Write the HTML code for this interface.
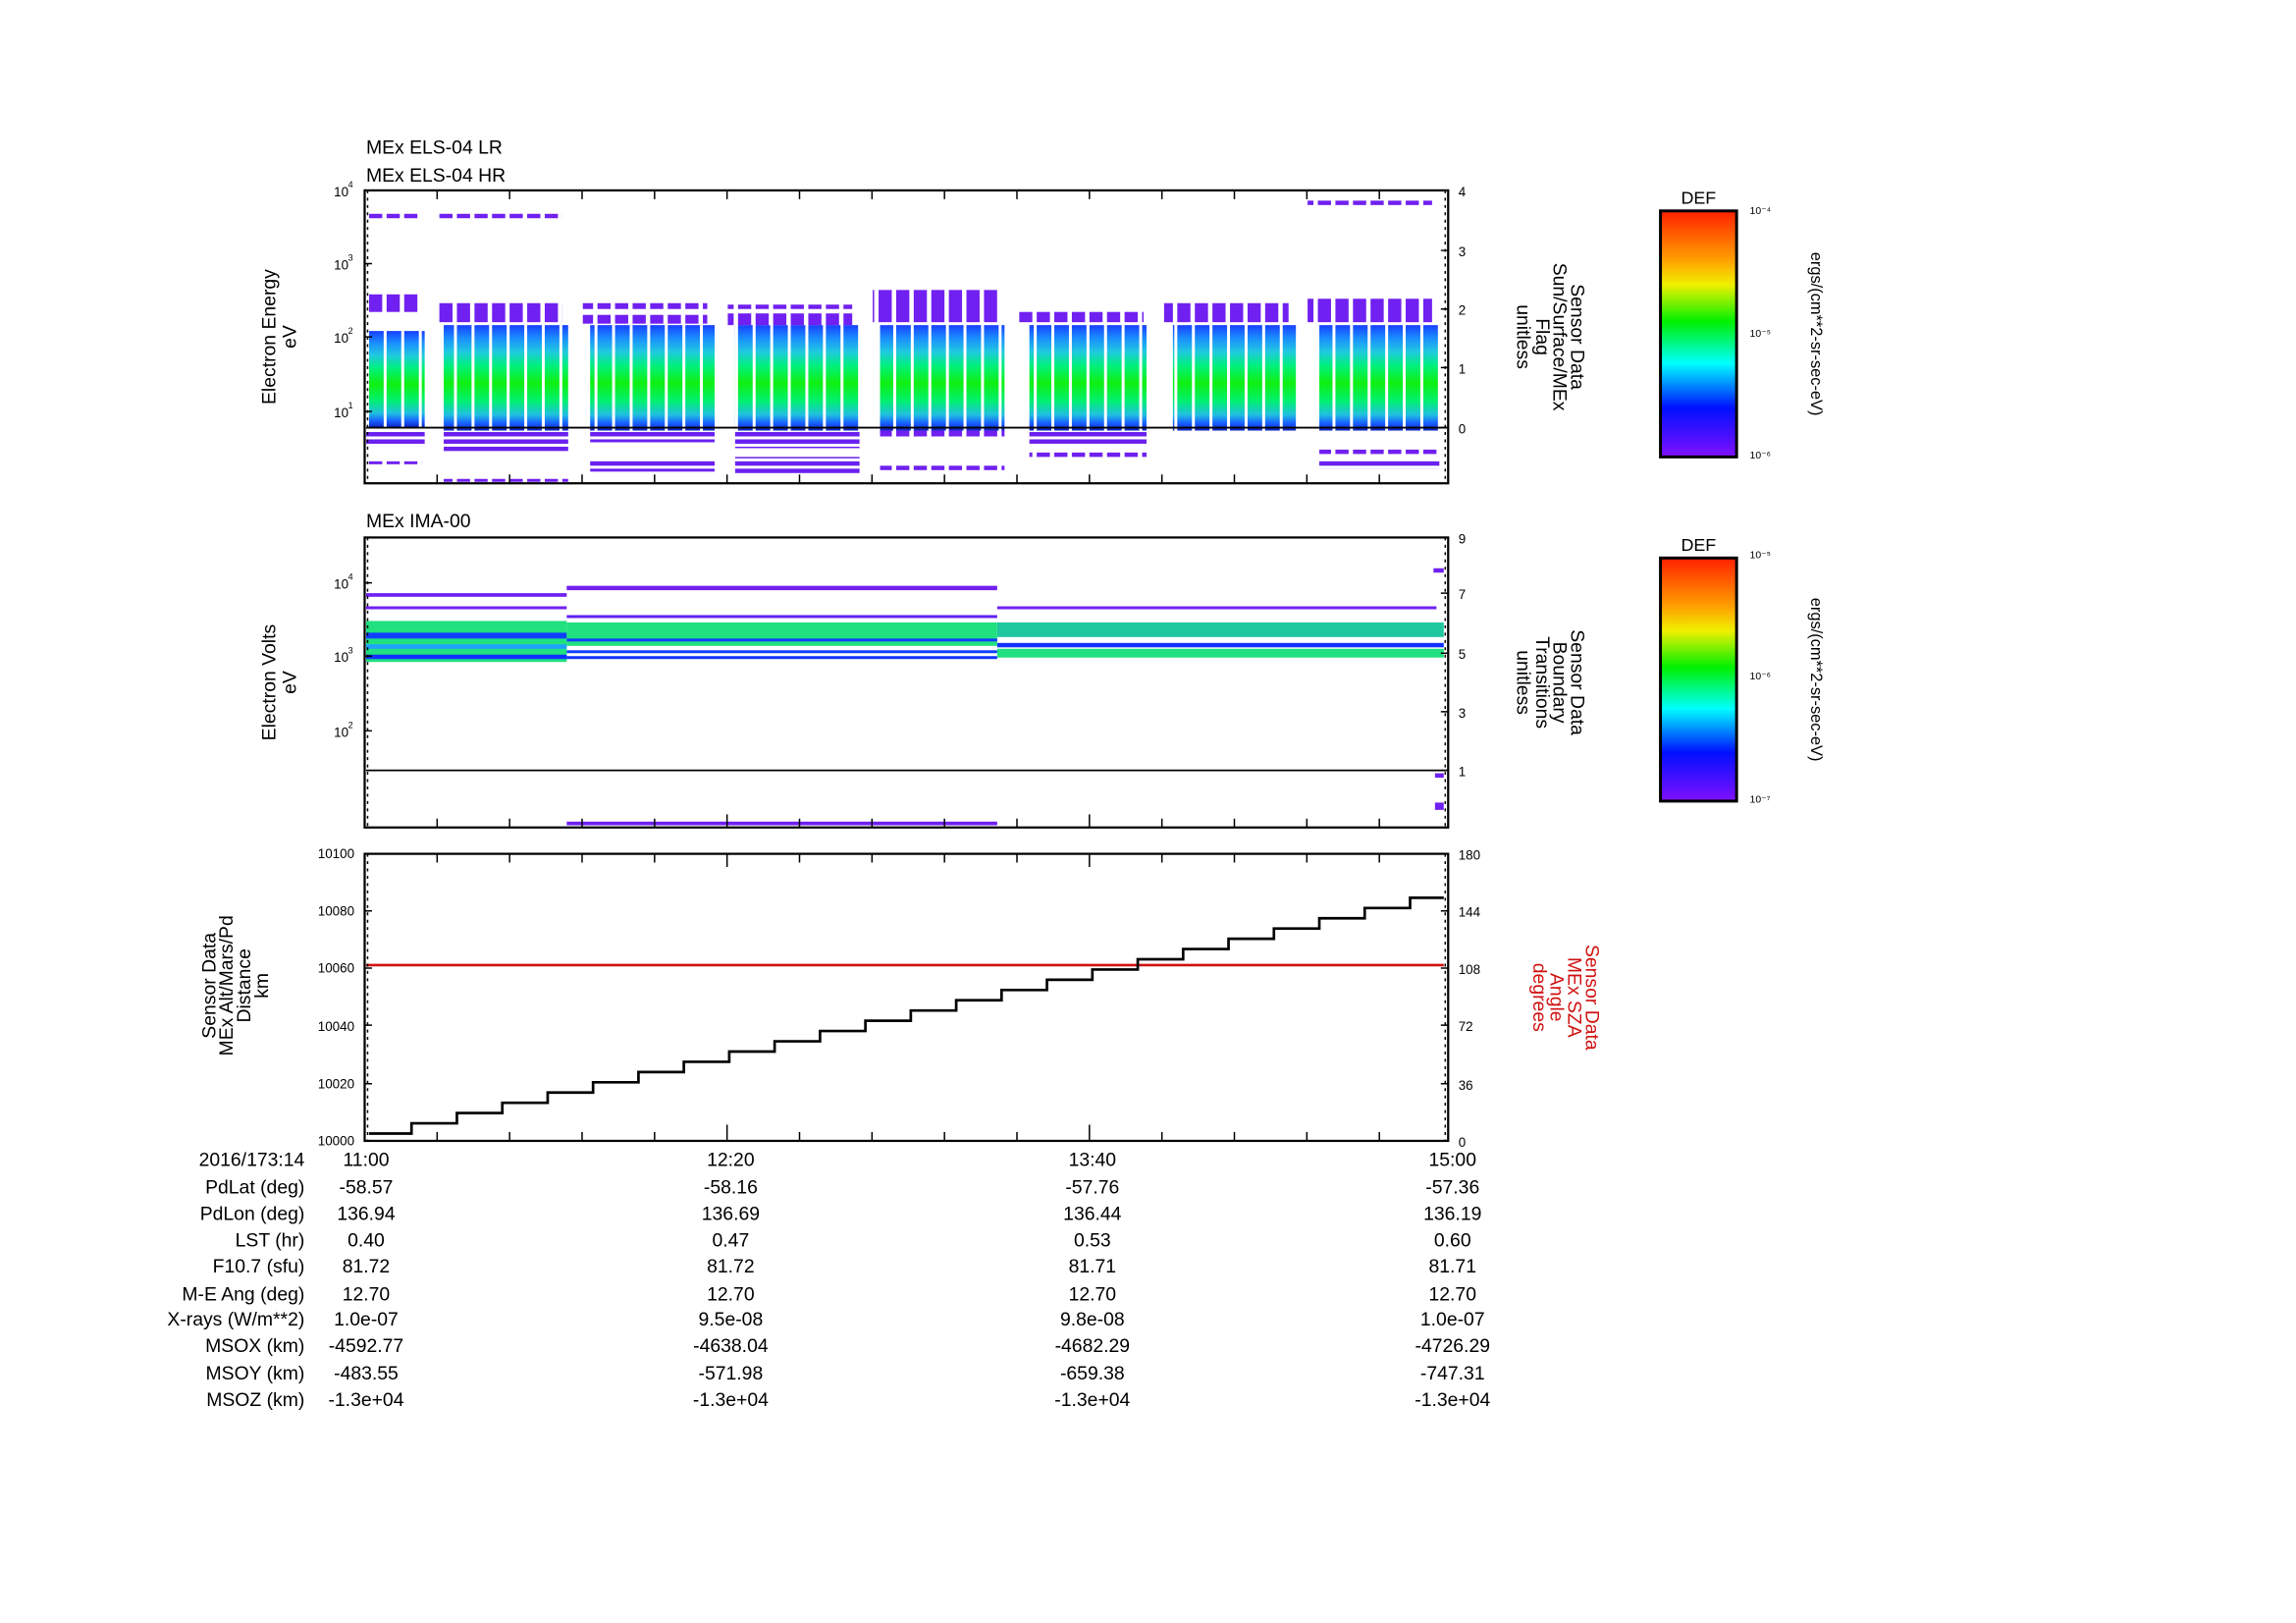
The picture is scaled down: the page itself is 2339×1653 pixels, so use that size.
<!DOCTYPE html>
<html><head><meta charset="utf-8"><style>
html,body{margin:0;padding:0;background:#fff;}
svg{display:block;font-family:"Liberation Sans",sans-serif;}
</style></head><body>
<svg width="2339" height="1653" viewBox="0 0 1568 1108.2" xmlns="http://www.w3.org/2000/svg">
<defs>
<linearGradient id="sp" x1="0" y1="0" x2="0" y2="1">
<stop offset="0" stop-color="#1840ff"/><stop offset="0.12" stop-color="#1a8cff"/>
<stop offset="0.25" stop-color="#20c8e0"/><stop offset="0.38" stop-color="#00f080"/>
<stop offset="0.55" stop-color="#10f010"/><stop offset="0.72" stop-color="#00f070"/>
<stop offset="0.85" stop-color="#20c0e0"/><stop offset="0.93" stop-color="#1860ff"/>
<stop offset="1" stop-color="#1020c0"/></linearGradient>
<linearGradient id="cb" x1="0" y1="0" x2="0" y2="1">
<stop offset="0" stop-color="#ff2000"/><stop offset="0.2" stop-color="#ffa000"/>
<stop offset="0.3" stop-color="#f0f000"/><stop offset="0.45" stop-color="#00f000"/>
<stop offset="0.62" stop-color="#00ffff"/><stop offset="0.8" stop-color="#0010ff"/>
<stop offset="1" stop-color="#8010ff"/></linearGradient>
<pattern id="gap" width="12" height="10" patternUnits="userSpaceOnUse"><rect x="10" y="0" width="2" height="10" fill="#fff"/></pattern>
<pattern id="dash" width="12" height="10" patternUnits="userSpaceOnUse"><rect x="0" y="0" width="9" height="10" fill="#7020f0"/></pattern>
<pattern id="hd" width="10" height="5" patternUnits="userSpaceOnUse"><rect x="0" y="0" width="10" height="3" fill="#6a20f0"/></pattern>
</defs>

<text x="250" y="105" font-size="13">MEx ELS-04 LR</text>
<text x="250" y="124" font-size="13">MEx ELS-04 HR</text>
<g>
<rect x="250" y="226" width="40" height="66" fill="url(#sp)"/>
<rect x="303" y="222" width="85" height="72" fill="url(#sp)"/>
<rect x="403" y="222" width="85" height="72" fill="url(#sp)"/>
<rect x="502" y="222" width="85" height="72" fill="url(#sp)"/>
<rect x="601" y="222" width="85" height="72" fill="url(#sp)"/>
<rect x="703" y="222" width="80" height="72" fill="url(#sp)"/>
<rect x="801" y="222" width="84" height="72" fill="url(#sp)"/>
<rect x="901" y="222" width="82" height="72" fill="url(#sp)"/>
<rect x="250" y="220" width="735" height="80" fill="url(#gap)"/>
<rect x="250" y="146" width="36" height="3" fill="url(#dash)"/>
<rect x="300" y="146" width="84" height="3" fill="url(#dash)"/>
<rect x="893" y="137" width="85" height="3" fill="url(#dash)"/>
<rect x="250" y="201" width="36" height="12" fill="url(#dash)"/>
<rect x="300" y="207" width="84" height="13" fill="url(#dash)"/>
<rect x="398" y="207" width="85" height="4" fill="url(#dash)"/>
<rect x="398" y="215" width="85" height="6" fill="url(#dash)"/>
<rect x="497" y="208" width="85" height="3" fill="url(#dash)"/>
<rect x="497" y="214" width="85" height="8" fill="url(#dash)"/>
<rect x="596" y="198" width="85" height="22" fill="url(#dash)"/>
<rect x="696" y="213" width="85" height="7" fill="url(#dash)"/>
<rect x="795" y="207" width="85" height="13" fill="url(#dash)"/>
<rect x="893" y="204" width="85" height="16" fill="url(#dash)"/>
<rect x="250" y="293" width="40" height="12" fill="url(#hd)"/>
<rect x="250" y="315" width="38" height="2" fill="url(#dash)"/>
<rect x="303" y="294" width="85" height="14" fill="url(#hd)"/>
<rect x="303" y="327" width="85" height="2" fill="url(#dash)"/>
<rect x="403" y="294" width="85" height="8" fill="url(#hd)"/>
<rect x="403" y="314" width="85" height="8" fill="url(#hd)"/>
<rect x="502" y="294" width="85" height="12" fill="url(#hd)"/>
<rect x="502" y="312" width="85" height="12" fill="url(#hd)"/>
<rect x="601" y="294" width="85" height="4" fill="url(#dash)"/>
<rect x="601" y="318" width="85" height="3" fill="url(#dash)"/>
<rect x="703" y="294" width="80" height="9" fill="url(#hd)"/>
<rect x="703" y="309" width="80" height="3" fill="url(#dash)"/>
<rect x="901" y="307" width="82" height="3" fill="url(#dash)"/>
<rect x="901" y="314" width="82" height="6" fill="url(#hd)"/>
</g>
<line x1="250" y1="292" x2="988" y2="292" stroke="#000" stroke-width="1.3"/>
<rect x="249" y="130" width="740" height="200" fill="none" stroke="#000" stroke-width="1.5"/>

<text x="250" y="360" font-size="13">MEx IMA-00</text>
<rect x="250" y="405" width="137" height="2.5" fill="#7020f0"/>
<rect x="250" y="414" width="137" height="2" fill="#7020f0"/>
<rect x="250" y="424" width="137" height="28" fill="#20e080"/>
<rect x="250" y="432" width="137" height="4" fill="#1040ff"/>
<rect x="250" y="440" width="137" height="3" fill="#20a0ff"/>
<rect x="250" y="447" width="137" height="3" fill="#1030ff"/>
<rect x="387" y="400" width="294" height="3" fill="#7020f0"/>
<rect x="387" y="420" width="294" height="2" fill="#6020f0"/>
<rect x="387" y="425" width="294" height="16" fill="#20e080"/>
<rect x="387" y="436" width="294" height="2" fill="#1040ff"/>
<rect x="387" y="444" width="294" height="2" fill="#1040ff"/>
<rect x="387" y="448" width="294" height="2" fill="#1030ff"/>
<rect x="681" y="414" width="300" height="2" fill="#7020f0"/>
<rect x="681" y="425" width="305" height="10" fill="#20c8a0"/>
<rect x="681" y="439" width="305" height="3" fill="#1030ff"/>
<rect x="681" y="443" width="305" height="6" fill="#20e080"/>
<rect x="979" y="388" width="7" height="3" fill="#7020f0"/>
<rect x="387" y="561" width="294" height="2.5" fill="#7020f0"/>
<rect x="980" y="528" width="6" height="3" fill="#7020f0"/>
<rect x="980" y="548" width="6" height="5" fill="#7020f0"/>
<line x1="250" y1="526" x2="988" y2="526" stroke="#000" stroke-width="1.2"/>
<rect x="249" y="367" width="740" height="198" fill="none" stroke="#000" stroke-width="1.5"/>

<line x1="250" y1="659" x2="986" y2="659" stroke="#d01010" stroke-width="1.8"/>
<path d="M252 774 h29 v-7 h31 v-7 h31 v-7 h31 v-7 h31 v-7 h31 v-7 h31 v-7 h31 v-7 h31 v-7 h31 v-7 h31 v-7 h31 v-7 h31 v-7 h31 v-7 h31 v-7 h31 v-7 h31 v-7 h31 v-7 h31 v-7 h31 v-7 h31 v-7 h31 v-7 h31 v-7 h23" fill="none" stroke="#000" stroke-width="1.8"/>
<rect x="249" y="583" width="740" height="196" fill="none" stroke="#000" stroke-width="1.5"/>

<g stroke="#000" stroke-width="1">
<path d="M298.5 130v6M348 130v6M397.5 130v6M447 130v6M496.5 130v6M546 130v6M595.5 130v6M645 130v6M694.5 130v6M744 130v6M793.5 130v6M843 130v6M892.5 130v6M942 130v6"/>
<path d="M298.5 330v-6M348 330v-6M397.5 330v-6M447 330v-6M496.5 330v-6M546 330v-6M595.5 330v-6M645 330v-6M694.5 330v-6M744 330v-6M793.5 330v-6M843 330v-6M892.5 330v-6M942 330v-6"/>
<path d="M298.5 565v-6M348 565v-6M397.5 565v-6M447 565v-6M496.5 565v-9M546 565v-6M595.5 565v-6M645 565v-6M694.5 565v-6M744 565v-9M793.5 565v-6M843 565v-6M892.5 565v-6M942 565v-6"/>
<path d="M298.5 583v6M348 583v6M397.5 583v6M447 583v6M496.5 583v9M546 583v6M595.5 583v6M645 583v6M694.5 583v6M744 583v9M793.5 583v6M843 583v6M892.5 583v6M942 583v6"/>
<path d="M298.5 779v-6M348 779v-6M397.5 779v-6M447 779v-6M496.5 779v-11M546 779v-6M595.5 779v-6M645 779v-6M694.5 779v-6M744 779v-11M793.5 779v-6M843 779v-6M892.5 779v-6M942 779v-6"/>
<path d="M249 180h5M249 230h5M249 281h5M249 398h5M249 448h5M249 499h5M249 622h5M249 661h5M249 700h5M249 740h5"/>
<path d="M989 171h-5M989 211h-5M989 251h-5M989 292h-5M989 405h-5M989 446h-5M989 486h-5M989 526h-5M989 622h-5M989 661h-5M989 700h-5M989 740h-5"/>
</g>
<g stroke="#000" stroke-width="1" stroke-dasharray="2 3">
<line x1="251" y1="130" x2="251" y2="330"/><line x1="987" y1="130" x2="987" y2="330"/>
<line x1="251" y1="367" x2="251" y2="565"/><line x1="987" y1="367" x2="987" y2="565"/>
<line x1="251" y1="583" x2="251" y2="779"/><line x1="987" y1="583" x2="987" y2="779"/>
</g>

<g font-size="9" text-anchor="end">
<text x="238" y="134">10</text><text x="241" y="128" font-size="6">4</text>
<text x="238" y="184">10</text><text x="241" y="178" font-size="6">3</text>
<text x="238" y="234">10</text><text x="241" y="228" font-size="6">2</text>
<text x="238" y="285">10</text><text x="241" y="279" font-size="6">1</text>
<text x="238" y="402">10</text><text x="241" y="396" font-size="6">4</text>
<text x="238" y="452">10</text><text x="241" y="446" font-size="6">3</text>
<text x="238" y="503">10</text><text x="241" y="497" font-size="6">2</text>
<text x="242" y="586">10100</text><text x="242" y="625">10080</text><text x="242" y="664">10060</text>
<text x="242" y="704">10040</text><text x="242" y="743">10020</text><text x="242" y="782">10000</text>
</g>
<g font-size="9">
<text x="996" y="134">4</text><text x="996" y="175">3</text><text x="996" y="215">2</text><text x="996" y="255">1</text><text x="996" y="296">0</text>
<text x="996" y="371">9</text><text x="996" y="409">7</text><text x="996" y="450">5</text><text x="996" y="490">3</text><text x="996" y="530">1</text>
<text x="996" y="587">180</text><text x="996" y="626">144</text><text x="996" y="665">108</text><text x="996" y="704">72</text><text x="996" y="744">36</text><text x="996" y="783">0</text>
</g>
<g font-size="13" text-anchor="middle">
<text transform="translate(188 230) rotate(-90)">Electron Energy</text>
<text transform="translate(202 230) rotate(-90)">eV</text>
<text transform="translate(188 466) rotate(-90)">Electron Volts</text>
<text transform="translate(202 466) rotate(-90)">eV</text>
<text transform="translate(147 673) rotate(-90)">Sensor Data</text>
<text transform="translate(159 673) rotate(-90)">MEx Alt/Mars/Pd</text>
<text transform="translate(171 673) rotate(-90)">Distance</text>
<text transform="translate(183 673) rotate(-90)">km</text>
<text transform="translate(1073 230) rotate(90)">Sensor Data</text>
<text transform="translate(1061 230) rotate(90)">Sun/Surface/MEx</text>
<text transform="translate(1049 230) rotate(90)">Flag</text>
<text transform="translate(1036 230) rotate(90)">unitless</text>
<text transform="translate(1073 466) rotate(90)">Sensor Data</text>
<text transform="translate(1061 466) rotate(90)">Boundary</text>
<text transform="translate(1049 466) rotate(90)">Transitions</text>
<text transform="translate(1036 466) rotate(90)">unitless</text>
<g fill="#d01010">
<text transform="translate(1083 681) rotate(90)">Sensor Data</text>
<text transform="translate(1071 681) rotate(90)">MEx SZA</text>
<text transform="translate(1059 681) rotate(90)">Angle</text>
<text transform="translate(1047 681) rotate(90)">degrees</text>
</g>
<text transform="translate(1237 228) rotate(90)" font-size="11">ergs/(cm**2-sr-sec-eV)</text>
<text transform="translate(1237 464) rotate(90)" font-size="11">ergs/(cm**2-sr-sec-eV)</text>
</g>

<text x="1160" y="139" font-size="12" text-anchor="middle">DEF</text>
<rect x="1134" y="144" width="52" height="168" fill="url(#cb)" stroke="#000" stroke-width="2"/>
<text x="1160" y="376" font-size="12" text-anchor="middle">DEF</text>
<rect x="1134" y="381" width="52" height="166" fill="url(#cb)" stroke="#000" stroke-width="2"/>
<g font-size="7">
<text x="1195" y="146">10⁻⁴</text><text x="1195" y="230">10⁻⁵</text><text x="1195" y="313">10⁻⁶</text>
<text x="1195" y="381">10⁻⁵</text><text x="1195" y="464">10⁻⁶</text><text x="1195" y="548">10⁻⁷</text>
</g>

<g font-size="13" text-anchor="end">
<text x="208" y="796">2016/173:14</text>
<text x="208" y="815">PdLat (deg)</text>
<text x="208" y="833">PdLon (deg)</text>
<text x="208" y="851">LST (hr)</text>
<text x="208" y="869">F10.7 (sfu)</text>
<text x="208" y="888">M-E Ang (deg)</text>
<text x="208" y="905">X-rays (W/m**2)</text>
<text x="208" y="923">MSOX (km)</text>
<text x="208" y="942">MSOY (km)</text>
<text x="208" y="960">MSOZ (km)</text>
</g>
<g font-size="13" text-anchor="middle">
<text x="250" y="796">11:00</text><text x="499" y="796">12:20</text><text x="746" y="796">13:40</text><text x="992" y="796">15:00</text>
<text x="250" y="815">-58.57</text><text x="499" y="815">-58.16</text><text x="746" y="815">-57.76</text><text x="992" y="815">-57.36</text>
<text x="250" y="833">136.94</text><text x="499" y="833">136.69</text><text x="746" y="833">136.44</text><text x="992" y="833">136.19</text>
<text x="250" y="851">0.40</text><text x="499" y="851">0.47</text><text x="746" y="851">0.53</text><text x="992" y="851">0.60</text>
<text x="250" y="869">81.72</text><text x="499" y="869">81.72</text><text x="746" y="869">81.71</text><text x="992" y="869">81.71</text>
<text x="250" y="888">12.70</text><text x="499" y="888">12.70</text><text x="746" y="888">12.70</text><text x="992" y="888">12.70</text>
<text x="250" y="905">1.0e-07</text><text x="499" y="905">9.5e-08</text><text x="746" y="905">9.8e-08</text><text x="992" y="905">1.0e-07</text>
<text x="250" y="923">-4592.77</text><text x="499" y="923">-4638.04</text><text x="746" y="923">-4682.29</text><text x="992" y="923">-4726.29</text>
<text x="250" y="942">-483.55</text><text x="499" y="942">-571.98</text><text x="746" y="942">-659.38</text><text x="992" y="942">-747.31</text>
<text x="250" y="960">-1.3e+04</text><text x="499" y="960">-1.3e+04</text><text x="746" y="960">-1.3e+04</text><text x="992" y="960">-1.3e+04</text>
</g>
</svg>
</body></html>
